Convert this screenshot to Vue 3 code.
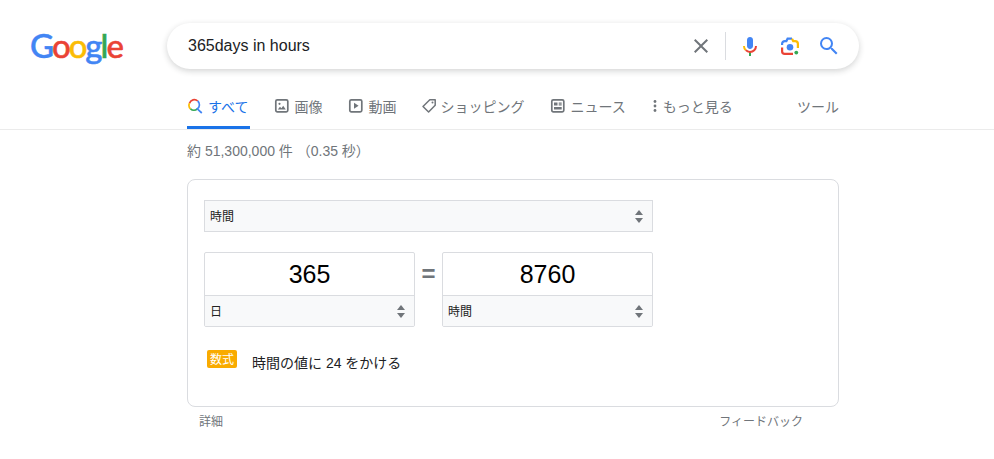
<template>
  <div class="page">
    <header class="top">
      <div class="logo" aria-label="Google">
        <span class="blue">G</span><span class="red">o</span><span class="yellow">o</span><span class="blue">g</span><span class="green">l</span><span class="red">e</span>
      </div>
      <div class="searchbox">
        <span class="query">365days in hours</span>
        <svg class="clear" width="24" height="24" viewBox="0 0 24 24">
          <path fill="#70757a" d="M19 6.41 17.59 5 12 10.59 6.41 5 5 6.41 10.59 12 5 17.59 6.41 19 12 13.41 17.59 19 19 17.59 13.41 12z" />
        </svg>
        <span class="divider"></span>
        <svg class="mic" width="24" height="24" viewBox="0 0 24 24">
          <path fill="#4285f4" d="M12 15c1.66 0 3-1.31 3-2.97V5.98C15 4.31 13.66 3 12 3S9 4.31 9 5.98v6.05C9 13.69 10.34 15 12 15z" />
          <path fill="#34a853" d="M11 18.1h2V22h-2z" />
          <path fill="#fbbc04" d="M7.05 16.87A6.98 6.98 0 0 1 5 12h2c0 1.38.56 2.63 1.46 3.54z" />
          <path fill="#ea4335" d="M12 17c-1.4 0-2.63-.56-3.54-1.46l-1.41 1.33A7 7 0 0 0 12 19a7 7 0 0 0 7-7h-2a5 5 0 0 1-5 5z" />
        </svg>
        <svg class="lens" width="24" height="24" viewBox="0 0 24 24" fill="none" stroke-width="2.200">
          <circle cx="12" cy="13.200" r="3.300" fill="#4285f4" stroke="none" />
          <circle cx="18.300" cy="18.600" r="1.900" fill="#34a853" stroke="none" />
          <path stroke="#4285f4" d="M4.100 11V9.800A2.700 2.700 0 0 1 6.800 7.100H8.400L9.600 4.700H14" />
          <path stroke="#fbbc04" d="M14 4.700 15.200 7.100H17.200A2.700 2.700 0 0 1 19.900 9.800V14" />
          <path stroke="#ea4335" d="M4.100 13.500V17.200A2.700 2.700 0 0 0 6.800 19.900H15" />
        </svg>
        <svg class="go" width="24" height="24" viewBox="0 0 24 24">
          <path fill="#4285f4" d="M15.5 14h-.79l-.28-.27A6.470 6.470 0 0 0 16 9.500 6.500 6.500 0 1 0 9.500 16c1.610 0 3.090-.59 4.230-1.570l.27.28v.79l5 4.990L20.490 19l-4.990-5zm-6 0C7.010 14 5 11.990 5 9.500S7.010 5 9.500 5 14 7.010 14 9.500 11.990 14 9.500 14z" />
        </svg>
      </div>
    </header>

    <nav class="tabs">
      <a class="tab active">
        <svg width="16" height="16" viewBox="0 0 16 16" fill="none" stroke-width="1.700">
          <path stroke="#ea4335" d="M2.500 5.200A5 5 0 0 1 10.700 3" />
          <path stroke="#fbbc04" d="M2.500 5.200A5 5 0 0 0 3.500 10.900" />
          <path stroke="#34a853" d="M3.500 10.900A5 5 0 0 0 10.300 10.900" />
          <path stroke="#4285f4" d="M10.700 3A5 5 0 0 1 10.300 10.900L14.800 15" />
        </svg>
        <span>すべて</span>
      </a>
      <a class="tab">
        <svg width="16" height="16" viewBox="0 0 16 16">
          <rect x="2.800" y="1.800" width="12" height="12" rx="1.500" fill="none" stroke="#70757a" stroke-width="1.700" />
          <circle cx="6.500" cy="5.800" r="1.100" fill="#70757a" />
          <path fill="#70757a" d="M4.800 11.500 7 8.800 8.400 10.200 10.200 7.800 12.800 11.500z" />
        </svg>
        <span>画像</span>
      </a>
      <a class="tab">
        <svg width="16" height="16" viewBox="0 0 16 16">
          <rect x="2.800" y="1.800" width="12" height="12" rx="1.500" fill="none" stroke="#70757a" stroke-width="1.700" />
          <path fill="#70757a" d="M7 4.800v6l4.600-3z" />
        </svg>
        <span>動画</span>
      </a>
      <a class="tab tag">
        <svg width="16" height="16" viewBox="0 0 16 16">
          <path fill="none" stroke="#70757a" stroke-width="1.500" stroke-linejoin="round" d="M8.800 1.800H14.200V7.200L7.600 14 2 8.500z" />
          <circle cx="11.500" cy="4.600" r="1" fill="#70757a" />
        </svg>
        <span>ショッピング</span>
      </a>
      <a class="tab news">
        <svg width="16" height="16" viewBox="0 0 16 16">
          <rect x="2.800" y="1.800" width="12" height="12" rx="1.500" fill="none" stroke="#70757a" stroke-width="1.700" />
          <path fill="#70757a" d="M5 4.500h3.500v3H5zM9.700 4.500h3v1.200h-3zM9.700 6.300h3v1.200h-3zM5 9h7.700v2.400H5z" />
        </svg>
        <span>ニュース</span>
      </a>
      <a class="tab more">
        <svg width="16" height="16" viewBox="0 0 16 16">
          <circle cx="8" cy="3.500" r="1.400" fill="#70757a" />
          <circle cx="8" cy="8" r="1.400" fill="#70757a" />
          <circle cx="8" cy="12.500" r="1.400" fill="#70757a" />
        </svg>
        <span>もっと見る</span>
      </a>
      <a class="tab tools">ツール</a>
    </nav>

    <main class="results">
      <div class="stats">約 51,300,000 件 （0.35 秒）</div>

      <section class="card">
        <div class="select wide">
          <span>時間</span>
          <i class="updown"></i>
        </div>
        <div class="convert">
          <div class="unit">
            <div class="value">365</div>
            <div class="select inner">
              <span>日</span>
              <i class="updown"></i>
            </div>
          </div>
          <div class="equals">=</div>
          <div class="unit">
            <div class="value">8760</div>
            <div class="select inner">
              <span>時間</span>
              <i class="updown"></i>
            </div>
          </div>
        </div>
        <div class="formula">
          <span class="badge">数式</span>
          <span class="formula-text">時間の値に 24 をかける</span>
        </div>
      </section>

      <div class="foot">
        <a>詳細</a>
        <a>フィードバック</a>
      </div>
    </main>
  </div>
</template>

<script setup>
</script>

<style scoped>
.page {
  width: 994px;
  height: 459px;
  overflow: hidden;
  background: #fff;
  font-family: "Liberation Sans", "Noto Sans CJK JP", sans-serif;
  color: #202124;
}

.top {
  display: flex;
  align-items: center;
  padding-top: 23px;
  height: 46px;
}

.logo {
  width: 167px;
  flex-shrink: 0;
  box-sizing: border-box;
  padding-left: 30px;
  padding-bottom: 3px;
  font-family: "Lato", sans-serif;
  font-weight: 500;
  font-size: 33px;
  line-height: 46px;
  letter-spacing: -2px;
  -webkit-text-stroke: 0.5px;
  white-space: nowrap;
}

.blue { color: #4285f4; }
.red { color: #ea4335; }
.yellow { color: #fbbc05; }
.green { color: #34a853; }

.searchbox {
  width: 692px;
  height: 46px;
  box-sizing: border-box;
  display: flex;
  align-items: center;
  padding: 0 18px 0 21px;
  border-radius: 23px;
  background: #fff;
  box-shadow: 0 2px 6px rgba(32, 33, 36, 0.2);
}

.query {
  flex: 1;
  font-size: 16px;
  color: #202124;
}

.clear { margin-right: 12px; }

.divider {
  width: 1px;
  height: 28px;
  background: #dadce0;
  margin-right: 12px;
}

.mic { margin-right: 16px; }
.lens { margin-right: 15px; }

.tabs {
  display: flex;
  align-items: stretch;
  height: 60px;
  box-sizing: border-box;
  margin-left: 187px;
  margin-right: 155px;
  font-size: 14px;
  color: #70757a;
}

.tab {
  display: flex;
  align-items: center;
  gap: 5px;
  padding-top: 17px;
  margin-right: 25px;
  border-bottom: 3px solid transparent;
  white-space: nowrap;
}

.tab.active {
  color: #1a73e8;
  border-bottom-color: #1a73e8;
  padding-right: 2px;
  margin-right: 23px;
}

.tab.tag { gap: 3px; }
.tab.news { margin-right: 21px; }
.tab.more { gap: 0; margin-right: 0; }

.tab.tools {
  margin-left: auto;
  margin-right: 0;
}

.results {
  border-top: 1px solid #ebebeb;
  padding-left: 187px;
}

.stats {
  height: 49px;
  padding-top: 12px;
  box-sizing: border-box;
  font-size: 14px;
  line-height: 18px;
  color: #70757a;
}

.card {
  width: 652px;
  height: 228px;
  box-sizing: border-box;
  padding: 20px 16px 0;
  border: 1px solid #dadce0;
  border-radius: 8px;
}

.select {
  display: flex;
  align-items: center;
  justify-content: space-between;
  height: 32px;
  box-sizing: border-box;
  padding: 0 9px 2px 5px;
  border: 1px solid #dadce0;
  background: #f8f9fa;
  font-size: 12px;
  color: #222;
}

.wide { width: 449px; }

.updown {
  position: relative;
  display: block;
  width: 8px;
  height: 13px;
  top: 1px;
}

.updown::before,
.updown::after {
  content: "";
  position: absolute;
  left: 0;
  border-left: 4px solid transparent;
  border-right: 4px solid transparent;
}

.updown::before {
  top: 0;
  border-bottom: 5px solid #70757a;
}

.updown::after {
  bottom: 0;
  border-top: 5px solid #70757a;
}

.convert {
  display: flex;
  align-items: flex-start;
  margin-top: 20px;
}

.unit {
  width: 211px;
  height: 75px;
  box-sizing: border-box;
  border: 1px solid #dadce0;
  border-radius: 2px;
  overflow: hidden;
}

.value {
  height: 42px;
  font-size: 25px;
  line-height: 43px;
  text-align: center;
  color: #000;
}

.inner {
  height: 31px;
  border: none;
  border-top: 1px solid #dadce0;
}

.equals {
  width: 27px;
  text-align: center;
  font-size: 24px;
  font-weight: 700;
  line-height: 43px;
  color: #70757a;
}

.formula {
  display: flex;
  align-items: flex-start;
  margin-top: 23px;
  margin-left: 3px;
}

.badge {
  width: 30px;
  height: 18px;
  border-radius: 2px;
  background: #f9ab00;
  color: #fff;
  font-size: 12px;
  line-height: 21px;
  text-align: center;
}

.formula-text {
  margin-left: 15px;
  margin-top: 3px;
  font-size: 14px;
  line-height: 20px;
  color: #202124;
}

.foot {
  display: flex;
  justify-content: space-between;
  width: 604px;
  padding-left: 12px;
  margin-top: 6px;
  font-size: 12px;
  line-height: 18px;
  color: #70757a;
}
</style>

<style>
html,
body {
  margin: 0;
  background: #fff;
}
</style>
